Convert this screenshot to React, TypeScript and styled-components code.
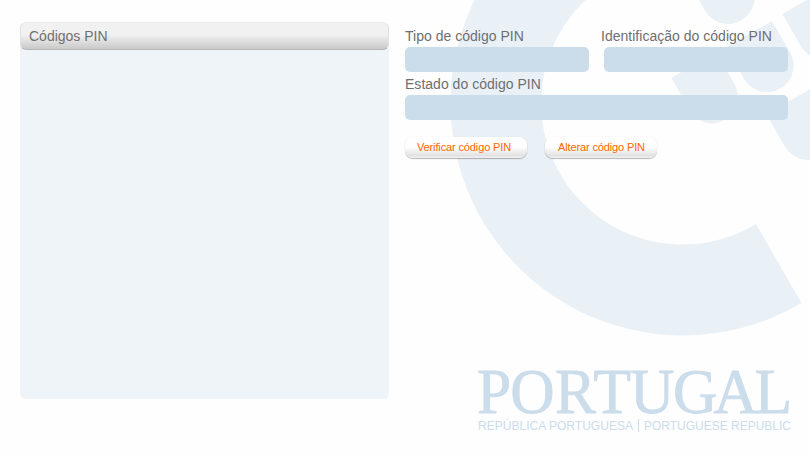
import React from 'react';
import styled, { createGlobalStyle } from 'styled-components';

const GlobalStyle = createGlobalStyle`
  * { box-sizing: border-box; }
  body {
    margin: 0;
    background: #fefefe;
    font-family: "Liberation Sans", Arial, sans-serif;
  }
`;

const Page = styled.main`
  position: relative;
  display: flex;
  gap: 16px;
  width: 810px;
  height: 457px;
  padding: 22px 19px 0 20px;
  overflow: hidden;
  background: #fefefe;
`;

const Watermark = styled.svg`
  position: absolute;
  inset: 0;
  width: 810px;
  height: 457px;
  fill: #e9f1f7;
`;

const ListPanel = styled.section`
  position: relative;
  flex: none;
  width: 369px;
  height: 377px;
  border-radius: 6px;
  background: #eef4f8;
`;

const PanelHeader = styled.h2`
  display: flex;
  align-items: center;
  height: 28px;
  margin: 0;
  padding: 0 8px;
  border: 1px solid #dfe1e3;
  border-top-color: #ececec;
  border-bottom-color: #b4b7ba;
  border-radius: 6px;
  background: linear-gradient(#f1f1f1 0%, #f1f1f1 45%, #c9c9c9 100%);
  color: #6f6f6f;
  font-size: 14px;
  line-height: 26px;
  font-weight: 400;
`;

const Details = styled.section`
  position: relative;
  flex: 1;
  display: flex;
  flex-direction: column;
`;

const FieldGrid = styled.div`
  display: grid;
  grid-template-columns: 184px 184px;
  column-gap: 15px;
  width: 383px;
`;

const Field = styled.div<{ $wide?: boolean }>`
  grid-column: ${(p) => (p.$wide ? '1 / -1' : 'auto')};
`;

const Label = styled.div<{ $height: number; $shift?: number }>`
  display: flex;
  align-items: flex-end;
  height: ${(p) => p.$height}px;
  margin-left: ${(p) => p.$shift ?? 0}px;
  padding-bottom: 3px;
  line-height: 16px;
  font-size: 14px;
  letter-spacing: 0.02px;
  white-space: nowrap;
  color: #6f6f6f;
`;

const Value = styled.div`
  height: 25px;
  border-radius: 5px;
  background: #cbdceb;
`;

const Actions = styled.div`
  display: flex;
  gap: 18px;
  margin-top: 17px;
`;

const ActionButton = styled.button<{ $width: number; $indent: number }>`
  width: ${(p) => p.$width}px;
  height: 21px;
  padding: 0 0 1px ${(p) => p.$indent}px;
  border: 0;
  border-radius: 8px;
  background: linear-gradient(#ffffff 0%, #fdfdfd 50%, #e2e2e2 88%, #f2f2f2 100%);
  box-shadow: 0 1px 1px rgba(0, 0, 0, 0.28), 0 0 1px rgba(0, 0, 0, 0.12);
  color: #ff6600;
  font: 11px/20px "Liberation Sans", Arial, sans-serif;
  letter-spacing: -0.13px;
  text-align: left;
  white-space: nowrap;
`;

const Brand = styled.svg`
  position: absolute;
  left: 470px;
  top: 360px;
  width: 330px;
  height: 80px;
  fill: #cbdceb;
`;

const BrandName = styled.text`
  font-family: "Liberation Serif", "Times New Roman", serif;
  font-size: 64px;
  stroke: #cbdceb;
  stroke-width: 0.8px;
`;

const BrandLine = styled.text`
  font-family: "Liberation Sans", Arial, sans-serif;
  font-size: 12px;
`;

export default function App() {
  return (
    <>
      <GlobalStyle />
      <Page>
        <Watermark viewBox="0 0 810 457" aria-hidden="true">
          <path d="M801.5 303A232.5 232.5 0 1 1 683 -129.5V-38.5A141.5 141.5 0 1 0 756 224Z" />
          <path d="M680 -33.5L705 10.7A26.5 26.5 0 0 0 751 -16L740 -35Z" />
          <path d="M772 21L790 52.2A26.5 26.5 0 0 1 744 78.8L726 47.5Z" />
          <path d="M671.5 77.7L689.5 110.5A26 26 0 0 0 734.5 84.2L716.5 51.7Z" />
          <path d="M782.3 14L801 46.3A26.5 26.5 0 0 0 847 19.8L828 -12.5Z" />
          <path d="M766.2 114L785 146.7A26.5 26.5 0 0 0 831 120.2L812 88Z" />
        </Watermark>
        <ListPanel>
          <PanelHeader>Códigos PIN</PanelHeader>
        </ListPanel>
        <Details>
          <FieldGrid>
            <Field>
              <Label $height={25}>Tipo de código PIN</Label>
              <Value />
            </Field>
            <Field>
              <Label $height={25} $shift={-3}>Identificação do código PIN</Label>
              <Value />
            </Field>
            <Field $wide>
              <Label $height={23}>Estado do código PIN</Label>
              <Value />
            </Field>
          </FieldGrid>
          <Actions>
            <ActionButton $width={122} $indent={12}>Verificar código PIN</ActionButton>
            <ActionButton $width={112} $indent={13}>Alterar código PIN</ActionButton>
          </Actions>
        </Details>
        <Brand viewBox="470 360 330 80">
          <BrandName transform="translate(477 413) scale(0.96 1)" x="0 34.6 81.3 121.4 159.4 204.2 246.4 289" y="0">
            PORTUGAL
          </BrandName>
          <BrandLine x="478" y="430" textLength="155" lengthAdjust="spacingAndGlyphs">REPÚBLICA PORTUGUESA</BrandLine>
          <rect x="638" y="419" width="1" height="13" />
          <BrandLine x="644" y="430" textLength="147" lengthAdjust="spacingAndGlyphs">PORTUGUESE REPUBLIC</BrandLine>
        </Brand>
      </Page>
    </>
  );
}
